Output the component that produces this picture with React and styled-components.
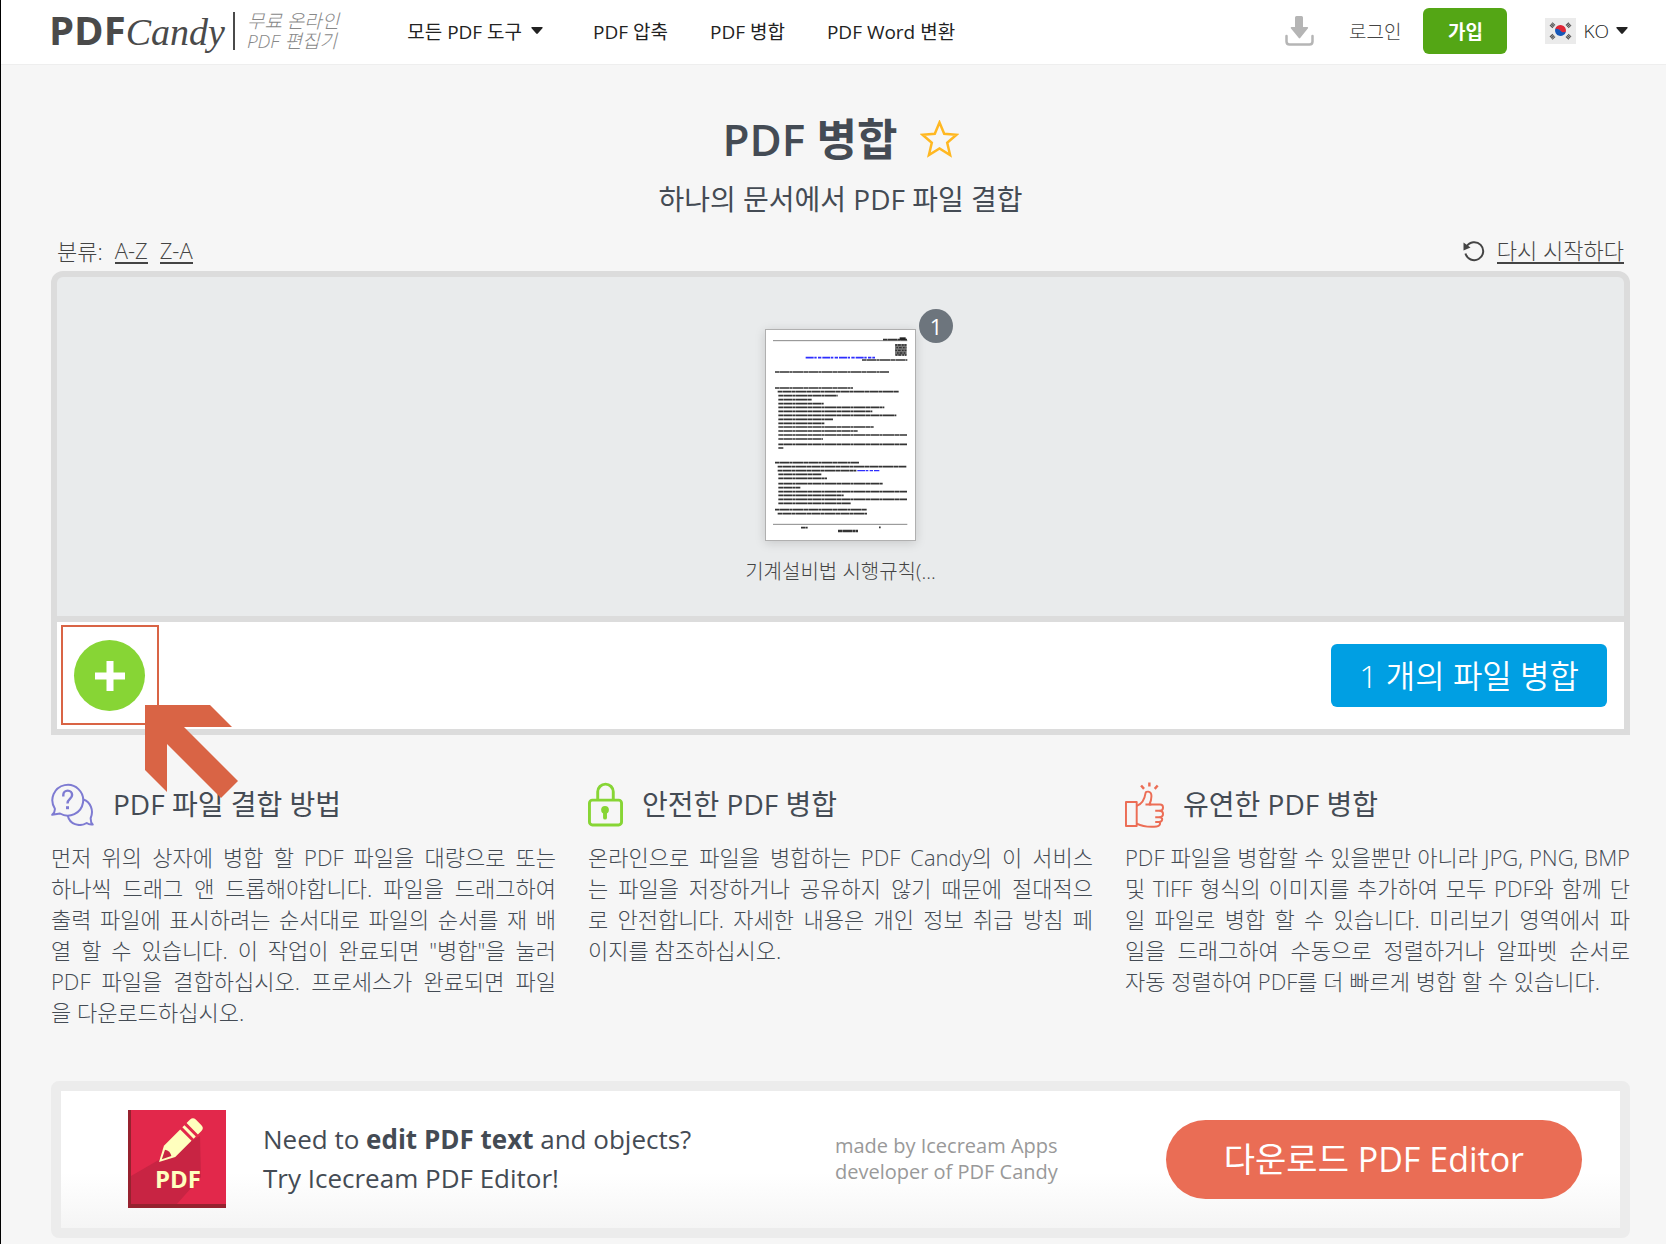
import styled, { createGlobalStyle } from 'styled-components';

const thumbLines = [
  [166, 247, 342], [166, 295, 234], [174, 306, 364], [176, 318, 178], [176, 330, 100],
  [176, 342, 136], [176, 353, 318], [176, 365, 282], [176, 377, 354], [176, 389, 164],
  [176, 401, 138], [176, 412, 286], [176, 424, 238], [176, 436, 386], [176, 448, 134],
  [176, 464, 386], [176, 475, 16], [166, 519, 252], [174, 531, 386], [174, 543, 236],
  [176, 554, 130], [176, 566, 146], [176, 582, 314], [176, 594, 66], [176, 606, 386],
  [176, 617, 196], [176, 629, 386], [176, 641, 218], [166, 660, 276], [174, 672, 268],
];

const navItems = ['PDF 압축', 'PDF 병합', 'PDF Word 변환'];

const features = [
  {
    icon: <QuestionIcon />,
    title: 'PDF 파일 결합 방법',
    lines: [
      '먼저 위의 상자에 병합 할 PDF 파일을 대량으로 또는',
      '하나씩 드래그 앤 드롭해야합니다. 파일을 드래그하여',
      '출력 파일에 표시하려는 순서대로 파일의 순서를 재 배',
      '열 할 수 있습니다. 이 작업이 완료되면 "병합"을 눌러',
      'PDF 파일을 결합하십시오. 프로세스가 완료되면 파일',
      '을 다운로드하십시오.',
    ],
  },
  {
    icon: <LockIcon />,
    title: '안전한 PDF 병합',
    lines: [
      '온라인으로 파일을 병합하는 PDF Candy의 이 서비스',
      '는 파일을 저장하거나 공유하지 않기 때문에 절대적으',
      '로 안전합니다. 자세한 내용은 개인 정보 취급 방침 페',
      '이지를 참조하십시오.',
    ],
  },
  {
    icon: <ThumbUpIcon />,
    title: '유연한 PDF 병합',
    lines: [
      'PDF 파일을 병합할 수 있을뿐만 아니라 JPG, PNG, BMP',
      '및 TIFF 형식의 이미지를 추가하여 모두 PDF와 함께 단',
      '일 파일로 병합 할 수 있습니다. 미리보기 영역에서 파',
      '일을 드래그하여 수동으로 정렬하거나 알파벳 순서로',
      '자동 정렬하여 PDF를 더 빠르게 병합 할 수 있습니다.',
    ],
  },
];

function Caret() {
  return (
    <svg width="12" height="8" viewBox="0 0 12 8" aria-hidden="true">
      <path d="M1 0h10q1 0 .6 1L6.800 6.500q-.8.800-1.600 0L.4 1Q0 0 1 0z" fill="#222" />
    </svg>
  );
}

function DownloadIcon() {
  return (
    <svg width="29" height="30" viewBox="0 0 29 30" aria-hidden="true">
      <path d="M11.500 0h5q1.500 0 1.500 1.500V11h4.500q1 .2.500 1.200l-7.800 9.800q-.7.800-1.400 0L5.800 12.200Q5.400 11.200 6.400 11H10V1.500Q10 0 11.500 0z" fill="#b5b5b5" />
      <path d="M1.500 20v5.500q0 3 3 3h20q3 0 3-3V20" fill="none" stroke="#b5b5b5" strokeWidth="2.500" strokeLinecap="round" />
    </svg>
  );
}

function FlagIcon() {
  return (
    <svg width="31" height="26" viewBox="0 0 31 26" aria-hidden="true">
      <rect width="31" height="26" fill="#ebebeb" />
      <path d="M10.200 11a5.500 5.500 0 0 1 10.700 2.500c-1 2.300-4 2-5.300-.2s-4.500-2-5.400-2.300z" fill="#e02636" />
      <path d="M10.200 11a5.500 5.500 0 1 0 10.700 2.500c-1 1.200-4 1-5.300-.8s-4-2.600-5.400-1.700z" fill="#1557b8" />
      <g stroke="#555" strokeWidth="4" strokeDasharray="1.300 .4">
        <path d="M6 8.800l3-3.200M22 20.400l3-3.200M6 17.200l3 3.200M22 5.600l3 3.200" />
      </g>
    </svg>
  );
}

function StarIcon() {
  return (
    <svg width="39" height="39" viewBox="0 0 39 39" aria-hidden="true">
      <path d="M19.500 2.500l4.700 11.200 12.300 1-9.300 8 2.900 12.300-10.600-6.500L8.900 35l2.900-12.300-9.300-8 12.300-1z" fill="none" stroke="#ffb822" strokeWidth="2.500" />
    </svg>
  );
}

function RestartIcon() {
  return (
    <svg width="22" height="22" viewBox="0 0 22 22" aria-hidden="true">
      <path d="M2.500 13.500a9 9 0 1 0 1-7" fill="none" stroke="#444" strokeWidth="2" />
      <path d="M.5 2.500v8l7-3z" fill="#444" />
    </svg>
  );
}

function PlusIcon() {
  return (
    <svg width="30" height="30" viewBox="0 0 30 30" aria-hidden="true">
      <path d="M15 0v30M0 15h30" stroke="#fff" strokeWidth="7" />
    </svg>
  );
}

function QuestionIcon() {
  return (
    <svg width="43" height="43" viewBox="0 0 43 43" fill="none" stroke="#7e7bd2" strokeWidth="2" aria-hidden="true">
      <path d="M3.800 25.500A15.400 15.400 0 1 1 9 30.500L1.200 31.800Q4.300 29 3.800 25.500z" strokeLinejoin="round" />
      <path d="M32.500 16.500c7 2.500 10.500 11 7.200 18.500q-.2 4.500 2 6.500-3.500.5-6-1.500C28 44.500 18.500 41 16.800 32.800" strokeLinejoin="round" />
      <path d="M12.300 13.500v-1.500a4.400 4.400 0 0 1 8.800 0c0 4-4.600 4-4.600 8.500" strokeWidth="2.400" />
      <path d="M16.500 23.200v3" strokeWidth="3" />
    </svg>
  );
}

function LockIcon() {
  return (
    <svg width="35" height="45" viewBox="0 0 36 45" fill="none" stroke="#87d535" strokeWidth="3" aria-hidden="true">
      <rect x="1.500" y="18" width="33" height="25.500" rx="3" />
      <path d="M10 18V9.500a8 8 0 0 1 16 0V18" />
      <circle cx="17.500" cy="28" r="4" fill="#87d535" stroke="none" />
      <path d="M17.500 29v7" strokeWidth="4" strokeLinecap="round" />
    </svg>
  );
}

function ThumbUpIcon() {
  return (
    <svg width="39" height="47" viewBox="0 0 40 47" fill="none" stroke="#ec6d55" strokeWidth="2" strokeLinejoin="round" aria-hidden="true">
      <path d="M1 21h11v24.500H1z" />
      <path d="M12 25c5-2 8-6 9-13 .3-2.500 5.500-2.500 6 1.500.4 3.500-.5 7-2 10H36c4 0 4 6 0 6.500 4 .5 4 6 0 6.500 3 .5 3 4.500-1 5 2 1.500.5 4.500-2.500 4.500-8 .8-14 .3-20.500-3" />
      <path d="M21 23.500h6M31 30h5M31 36.500h5M31 41.500h4" />
      <path d="M25 1v4M16.500 4l3 3.500M33.500 4l-3 3.500" strokeWidth="2.500" />
    </svg>
  );
}

function DocumentThumb() {
  return (
    <svg width="149" height="210" viewBox="139 121 447 630" role="img" aria-label="기계설비법 시행규칙">
      <g stroke="#888" strokeWidth="3">
        <path d="M160 153h403M160 704h403" />
      </g>
      <g stroke="#333" strokeWidth="5" strokeDasharray="14 1 27 1 9 1 33 1">
        {thumbLines.map(([x, y, w]) => (
          <path key={y} d={`M${x} ${y}h${w}`} />
        ))}
        <path d="M490 150h72" />
        <path d="M427 211h136" strokeWidth="4" />
        <path d="M244 714h20M478 713h5" />
        <path d="M355 724h60" strokeWidth="7" />
      </g>
      <path d="M540 147h18" stroke="#222" strokeWidth="8" />
      <g stroke="#2e2eff" strokeWidth="5" strokeDasharray="24 2 7 4 10 3">
        <path d="M258 204h208" />
        <path d="M413 543h66" strokeWidth="4" />
      </g>
      <rect x="526" y="163" width="35" height="35" fill="#777" />
      <g stroke="#333" strokeWidth="4" strokeDasharray="5 3 8 4">
        <path d="M527 166h33M530 174h30M527 182h33M532 190h28M528 196h32" />
      </g>
    </svg>
  );
}

function PointerArrow() {
  return (
    <svg width="94" height="94" viewBox="0 0 94 94" aria-hidden="true">
      <path d="M0 0h65l22 22H39l54 54-17 17-54-54v48L0 65z" fill="#d96445" />
    </svg>
  );
}

function EditorLogo() {
  return (
    <svg width="98" height="98" viewBox="0 0 98 98" aria-hidden="true">
      <rect width="98" height="98" fill="#e2284b" />
      <path d="M72 26L3 66v29h45l25-28z" fill="#c82443" />
      <path d="M0 0h3v94h95v4H0z" fill="#96222f" />
      <g transform="translate(31 52) rotate(-45)" fill="#ffffbe">
        <path d="M0 0L15-8H38V8H15z" />
        <path d="M41-8h3V8h-3zM47-8h5q4 0 4 4v8q0 4-4 4h-5z" />
        <path d="M4 0l9-4.500q3 4.500 0 9z" fill="#c82443" />
      </g>
      <text x="50" y="78" textAnchor="middle" fill="#ffffbe" fontFamily="Open Sans, sans-serif" fontWeight="700" fontSize="24">PDF</text>
    </svg>
  );
}

const App = () => {
  return (
    <Page>
      <GlobalStyle />
      <Header>
        <Logo href="#">
          <LogoBold>PDF</LogoBold>
          <LogoScript>Candy</LogoScript>
        </Logo>
        <Tagline>
          무료 온라인
          <br />
          PDF 편집기
        </Tagline>
        <Nav>
          <MenuButton type="button" aria-haspopup="true">
            모든 PDF 도구
            <Caret />
          </MenuButton>
          {navItems.map((item) => (
            <NavLink key={item} href="#">{item}</NavLink>
          ))}
        </Nav>
        <Account>
          <IconButton type="button" aria-label="다운로드">
            <DownloadIcon />
          </IconButton>
          <LoginLink href="#">로그인</LoginLink>
          <SignUpButton type="button">가입</SignUpButton>
          <LanguageButton type="button" aria-haspopup="true">
            <FlagIcon />
            KO
            <Caret />
          </LanguageButton>
        </Account>
      </Header>

      <Main>
        <TitleRow>
          <Title>PDF 병합</Title>
          <IconButton type="button" aria-label="즐겨찾기">
            <StarIcon />
          </IconButton>
        </TitleRow>
        <Subtitle>하나의 문서에서 PDF 파일 결합</Subtitle>

        <SortRow>
          <SortGroup>
            분류:
            <SortLink href="#">A-Z</SortLink>
            <SortLink href="#">Z-A</SortLink>
          </SortGroup>
          <SortGroup>
            <RestartIcon />
            <SortLink href="#">다시 시작하다</SortLink>
          </SortGroup>
        </SortRow>

        <Workspace>
          <FileArea>
            <FileCard>
              <FilePreview>
                <DocumentThumb />
                <FileBadge>1</FileBadge>
              </FilePreview>
              <FileName>기계설비법 시행규칙(...</FileName>
            </FileCard>
          </FileArea>
          <ActionBar>
            <AddWrap>
              <AddButton type="button" aria-label="파일 추가">
                <PlusIcon />
              </AddButton>
              <Highlight />
              <Pointer>
                <PointerArrow />
              </Pointer>
            </AddWrap>
            <MergeButton type="button">1 개의 파일 병합</MergeButton>
          </ActionBar>
        </Workspace>

        <Features>
          {features.map(({ icon, title, lines }) => (
            <Feature key={title}>
              <FeatureHead>
                {icon}
                <FeatureTitle>{title}</FeatureTitle>
              </FeatureHead>
              <FeatureText>
                {lines.map((line) => (
                  <FeatureLine key={line}>{line}</FeatureLine>
                ))}
              </FeatureText>
            </Feature>
          ))}
        </Features>

        <Banner>
          <EditorLogo />
          <BannerText>
            Need to <strong>edit PDF text</strong> and objects?
            <br />
            Try Icecream PDF Editor!
          </BannerText>
          <BannerCredit>
            made by Icecream Apps
            <br />
            developer of PDF Candy
          </BannerCredit>
          <BannerButton type="button">다운로드 PDF Editor</BannerButton>
        </Banner>
      </Main>
    </Page>
  );
};

export default App;

const GlobalStyle = createGlobalStyle`
  * {
    box-sizing: border-box;
  }

  body {
    margin: 0;
    background-color: #f6f6f6;
    color: #444b54;
    font-family: 'Open Sans', 'Noto Sans CJK KR', sans-serif;
    font-weight: 300;
  }

  button {
    padding: 0;
    border: none;
    background: none;
    color: inherit;
    font: inherit;
    cursor: pointer;
  }

  svg {
    display: block;
    flex-shrink: 0;
  }
`;

const Page = styled.div`
  min-height: 100vh;
  border-left: 1px solid #000;
`;

const Header = styled.header`
  display: flex;
  align-items: center;
  height: 65px;
  padding: 0 38px 2px 48px;
  background-color: #fff;
  border-bottom: 1px solid #eee;
  color: #222;
  font-size: 19px;
  white-space: nowrap;
`;

const Logo = styled.a`
  display: flex;
  align-items: baseline;
  padding-right: 8px;
  border-right: 2px solid #4a4a4a;
  color: #4a4a4a;
  line-height: 36px;
  text-decoration: none;
`;

const LogoBold = styled.span`
  font-size: 40px;
  font-weight: 700;
`;

const LogoScript = styled.span`
  font-family: 'Liberation Serif', serif;
  font-size: 38px;
  font-style: italic;
`;

const Tagline = styled.span`
  margin-left: 12px;
  color: #888;
  font-style: italic;
  line-height: 20px;
`;

const Nav = styled.nav`
  display: flex;
  align-items: center;
  gap: 42px;
  margin-left: 68px;
`;

const MenuButton = styled.button`
  display: flex;
  align-items: center;
  gap: 9px;
  margin-right: 8px;
  font-weight: 400;
`;

const NavLink = styled.a`
  color: #222;
  font-weight: 400;
  text-decoration: none;
`;

const Account = styled.div`
  display: flex;
  align-items: center;
  margin-left: auto;
`;

const IconButton = styled.button`
  display: flex;
`;

const LoginLink = styled.a`
  margin: 0 22px 0 35px;
  color: #444;
  text-decoration: none;
`;

const SignUpButton = styled.button`
  width: 84px;
  height: 46px;
  border-radius: 6px;
  background-color: #54a615;
  color: #fff;
  font-weight: 700;
`;

const LanguageButton = styled.button`
  display: flex;
  align-items: center;
  gap: 7px;
  margin-left: 38px;
`;

const Main = styled.main`
  padding: 46px 36px 6px 50px;
`;

const TitleRow = styled.div`
  display: flex;
  justify-content: center;
  align-items: center;
  gap: 22px;
`;

const Title = styled.h1`
  margin: 0;
  font-size: 44px;
  font-weight: 600;
  line-height: 56px;
`;

const Subtitle = styled.p`
  margin: 14px 0 19px;
  font-size: 28px;
  font-weight: 400;
  line-height: 36px;
  text-align: center;
`;

const SortRow = styled.div`
  display: flex;
  justify-content: space-between;
  padding: 0 6px;
  margin-bottom: 5px;
  color: #444;
  font-size: 22px;
  line-height: 30px;
`;

const SortGroup = styled.div`
  display: flex;
  align-items: center;
  gap: 12px;
`;

const SortLink = styled.a`
  color: #444;
  text-decoration: none;
  line-height: 24px;
  border-bottom: 2px solid #444;
`;

const Workspace = styled.section`
  border: 6px solid #dcdcdc;
  border-radius: 12px 12px 0 0;
  background-color: #e9ebec;
`;

const FileArea = styled.div`
  display: flex;
  justify-content: center;
  padding: 52px 20px 32px;
`;

const FileCard = styled.div`
  display: flex;
  flex-direction: column;
  align-items: center;
  gap: 19px;
`;

const FilePreview = styled.div`
  position: relative;
  border: 1px solid #b0b0b0;
  background-color: #fff;
  box-shadow: 0 2px 10px rgba(0, 0, 0, 0.15);
`;

const FileBadge = styled.span`
  position: absolute;
  top: -21px;
  right: -38px;
  width: 34px;
  height: 34px;
  border-radius: 50%;
  background-color: #6d757d;
  color: #fff;
  font-size: 22px;
  font-weight: 400;
  line-height: 34px;
  text-align: center;
`;

const FileName = styled.span`
  color: #444;
  font-size: 20px;
  line-height: 24px;
`;

const ActionBar = styled.div`
  display: flex;
  justify-content: space-between;
  align-items: center;
  padding: 18px 17px;
  border-top: 6px solid #dcdcdc;
  background-color: #fff;
`;

const AddWrap = styled.div`
  position: relative;
`;

const AddButton = styled.button`
  display: flex;
  justify-content: center;
  align-items: center;
  width: 71px;
  height: 71px;
  border-radius: 50%;
  background-color: #87d535;
`;

const Highlight = styled.div`
  position: absolute;
  inset: -15px -14px -14px -13px;
  border: 2px solid #d96445;
  pointer-events: none;
`;

const Pointer = styled.div`
  position: absolute;
  top: 65px;
  left: 71px;
  pointer-events: none;
`;

const MergeButton = styled.button`
  height: 63px;
  padding: 0 28px 4px;
  border-radius: 6px;
  background-color: #009fe3;
  color: #fff;
  font-size: 32px;
  font-weight: 350;
`;

const Features = styled.section`
  display: grid;
  grid-template-columns: repeat(3, 1fr);
  gap: 32px;
  margin: 46px 0 53px;
`;

const Feature = styled.article`
  min-width: 0;
`;

const FeatureHead = styled.div`
  display: flex;
  align-items: center;
  gap: 19px;
  height: 46px;
`;

const FeatureTitle = styled.h2`
  margin: 0;
  font-size: 28px;
  font-weight: 400;
  line-height: 36px;
`;

const FeatureText = styled.p`
  margin: 15px 0 0;
  font-size: 22px;
  line-height: 31px;
`;

const FeatureLine = styled.span`
  display: block;
  text-align: justify;
  text-align-last: justify;

  &:last-child {
    text-align-last: left;
  }
`;

const Banner = styled.section`
  display: flex;
  align-items: center;
  padding: 19px 38px 20px 67px;
  border: 10px solid #ececec;
  border-radius: 8px;
  background: linear-gradient(#fff 60%, #f5f5f5);
  white-space: nowrap;
`;

const BannerText = styled.p`
  margin: 0 0 0 37px;
  font-size: 26px;
  font-weight: 400;
  line-height: 39px;
`;

const BannerCredit = styled.p`
  margin: 0 108px 0 auto;
  color: #999;
  font-size: 20px;
  font-weight: 400;
  line-height: 26px;
`;

const BannerButton = styled.button`
  height: 79px;
  padding: 0 58px 4px;
  border-radius: 40px;
  background-color: #ea6d55;
  color: #fff;
  font-size: 34px;
  font-weight: 400;
`;
